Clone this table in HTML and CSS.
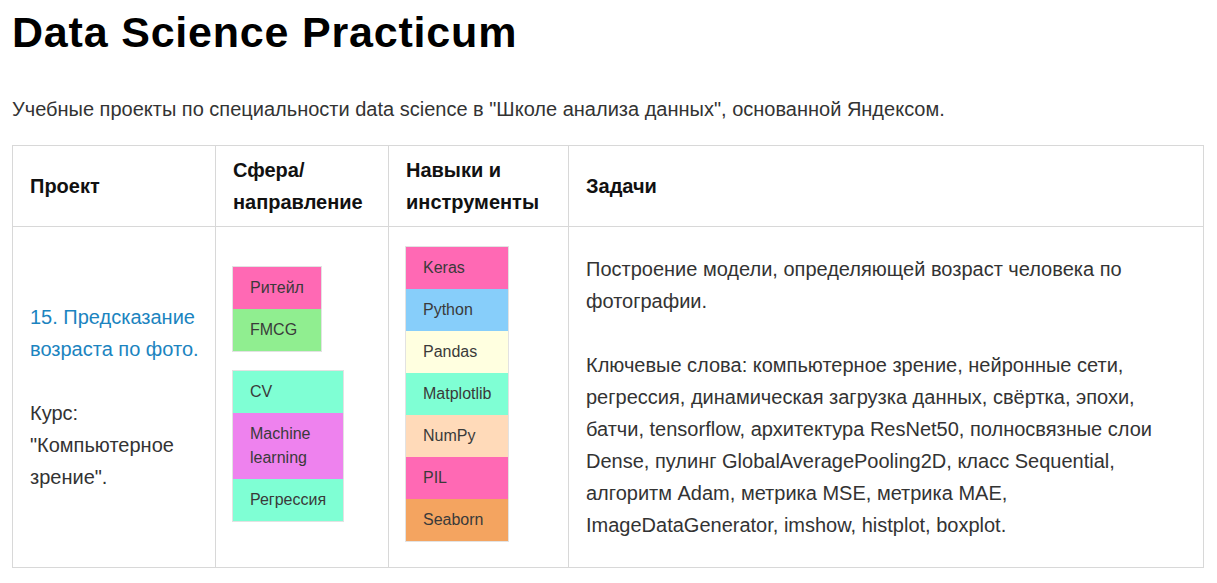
FILE: index.html
```html
<!DOCTYPE html>
<html lang="ru">
<head>
<meta charset="utf-8">
<title>Data Science Practicum</title>
<link rel="stylesheet" href="styles.css">
</head>
<body>
<main class="page">
  <h1 class="title">Data Science Practicum</h1>
  <p class="intro">Учебные проекты по специальности data science в "Школе анализа данных", основанной Яндексом.</p>
  <table class="projects">
    <colgroup>
      <col class="c1"><col class="c2"><col class="c3"><col class="c4">
    </colgroup>
    <thead>
      <tr>
        <th>Проект</th>
        <th>Сфера/<br>направление</th>
        <th>Навыки и<br>инструменты</th>
        <th>Задачи</th>
      </tr>
    </thead>
    <tbody>
      <tr>
        <td class="project-cell"><a class="link" href="#">15. Предсказание возраста по фото.</a><br><br>Курс: "Компьютерное зрение".</td>
        <td class="tag-cell">
          <div class="stack">
            <div class="group">
              <div class="tag hotpink">Ритейл</div>
              <div class="tag lightgreen">FMCG</div>
            </div>
            <div class="group">
              <div class="tag aquamarine">CV</div>
              <div class="tag violet">Machine learning</div>
              <div class="tag aquamarine">Регрессия</div>
            </div>
          </div>
        </td>
        <td class="tag-cell">
          <div class="stack">
            <div class="group">
              <div class="tag hotpink">Keras</div>
              <div class="tag skyblue">Python</div>
              <div class="tag lightyellow">Pandas</div>
              <div class="tag aquamarine">Matplotlib</div>
              <div class="tag peach">NumPy</div>
              <div class="tag hotpink">PIL</div>
              <div class="tag sandy">Seaborn</div>
            </div>
          </div>
        </td>
        <td>Построение модели, определяющей возраст человека по фотографии.<br><br>Ключевые слова: компьютерное зрение, нейронные сети, регрессия, динамическая загрузка данных, свёртка, эпохи, батчи, tensorflow, архитектура ResNet50, полносвязные слои Dense, пулинг GlobalAveragePooling2D, класс Sequential, алгоритм Adam, метрика MSE, метрика MAE, ImageDataGenerator, imshow, histplot, boxplot.</td>
      </tr>
    </tbody>
  </table>
</main>
</body>
</html>
```

FILE: styles.css
```css
html, body {
  margin: 0;
  padding: 0;
  background: #fff;
}

.page {
  padding: 0 0 0 12px;
  font-family: "Liberation Sans", Arial, sans-serif;
  color: #333;
}

.title {
  margin: 8px 0 0;
  font-size: 43px;
  line-height: 48px;
  letter-spacing: 0.8px;
  font-weight: 700;
  color: #000;
}

.intro {
  margin: 37px 0 20px;
  font-size: 20px;
  line-height: 32px;
  color: #333;
}

.projects {
  width: 1191px;
  table-layout: fixed;
  border-collapse: collapse;
  font-size: 20px;
  line-height: 32px;
}

.c1 { width: 203px; }
.c2 { width: 173px; }
.c3 { width: 180px; }
.c4 { width: 635px; }

.projects th,
.projects td {
  border: 1px solid #d8d8d8;
  padding: 8px 17px;
  text-align: left;
  vertical-align: middle;
}

.projects th {
  font-weight: 700;
  color: #111;
}

.projects td {
  padding-top: 26px;
  padding-bottom: 26px;
  color: #333;
}

.projects td.project-cell {
  padding-right: 6px;
}

.projects td.tag-cell {
  padding-top: 20px;
  padding-bottom: 20px;
}

.link {
  color: #1b84c0;
  text-decoration: none;
}

.stack {
  display: flex;
  flex-direction: column;
  align-items: flex-start;
  gap: 20px;
  margin-bottom: 6px;
}

.group {
  width: min-content;
  box-shadow: 0 0 0 1px #e2e2e2;
}

.tag {
  padding: 9px 17px;
  font-size: 16px;
  line-height: 24px;
  color: #3a3a3a;
}

.hotpink { background: #ff69b4; }
.lightgreen { background: #90ee90; }
.aquamarine { background: #7fffd4; }
.violet { background: #ee82ee; }
.skyblue { background: #87cefa; }
.lightyellow { background: #ffffe0; }
.peach { background: #ffdab9; }
.sandy { background: #f4a460; }
```
